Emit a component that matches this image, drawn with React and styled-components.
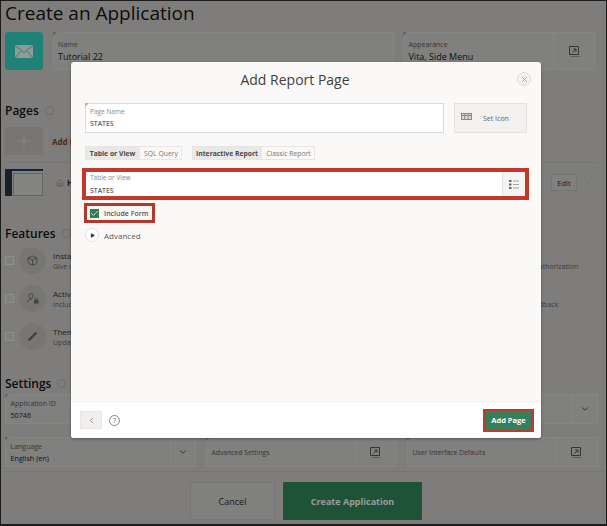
import React from 'react'
import styled, { createGlobalStyle } from 'styled-components'
import { ChevronDown, ChevronLeft, House, Plus, Star, X, Check, Play } from 'lucide-react'

const GlobalStyle = createGlobalStyle`
    html, body {
        margin: 0;
        padding: 0;
        overflow: hidden;
    }

    body {
        font-family: "Open Sans", "Liberation Sans", sans-serif;
        color: #222;
    }
`;

function MailIcon() {
    return (
        <svg width="18" height="13" viewBox="0 0 18 13">
            <rect width="18" height="13" fill="#f2fffb" />
            <path d="M0 0.5 L9 7.5 L18 0.5 M0 13 L6.5 5.5 M18 13 L11.5 5.5" fill="none" stroke="#5fd9cc" strokeWidth="1" />
        </svg>
    );
}

function OpenIcon() {
    return (
        <svg width="11" height="11" viewBox="0 0 11 11" fill="none" stroke="#5a5a5a" strokeWidth="1">
            <path d="M0.5 8.5 V0.5 H9.5 V8.5 H0.5" />
            <path d="M3.5 6.5 L7 3 M4.2 3 H7 V5.8" />
            <path d="M1.5 10.5 H10.5" stroke="#9a9a9a" />
        </svg>
    );
}

function TableIcon() {
    return (
        <svg width="11" height="7" viewBox="0 0 11 7" fill="none" stroke="#8a8886" strokeWidth="1">
            <rect x="0.5" y="0.5" width="10" height="6" fill="#dcdad8" />
            <path d="M3.8 0.5 V6.5 M7.2 0.5 V6.5 M0.5 2.5 H10.5" />
        </svg>
    );
}

function ListIcon() {
    return (
        <svg width="10" height="9" viewBox="0 0 10 9" fill="none" stroke="#a5a3a1" strokeWidth="1">
            <rect x="0" y="0" width="2.5" height="2" fill="#666" stroke="none" />
            <rect x="0" y="3.5" width="2.5" height="2" fill="#666" stroke="none" />
            <rect x="0" y="7" width="2.5" height="2" fill="#666" stroke="none" />
            <path d="M4 1 H10 M4 4.5 H10 M4 8 H10" />
        </svg>
    );
}

function InstallIcon() {
    return (
        <svg width="11" height="11" viewBox="0 0 11 11" fill="none" stroke="#6e6e6e" strokeWidth="0.9">
            <path d="M1 3 L5.5 1 L10 3 V6 C10 8.5 7.5 10 5.5 10 C3.5 10 1 8.5 1 6 Z" />
            <path d="M1 3 L5.5 5 L10 3 M5.5 5 V10" />
        </svg>
    );
}

function UserLockIcon() {
    return (
        <svg width="12" height="11" viewBox="0 0 12 11" fill="none" stroke="#6e6e6e" strokeWidth="0.9">
            <circle cx="4" cy="3" r="2.3" />
            <path d="M0.5 9.5 C0.5 7 2.5 6 5 6.3" />
            <rect x="7" y="7" width="4.5" height="3.5" fill="#6e6e6e" stroke="none" />
            <path d="M8 7 C8 4.8 10.5 4.8 10.5 7" />
        </svg>
    );
}

function BrushIcon() {
    return (
        <svg width="11" height="11" viewBox="0 0 11 11">
            <path d="M8.5 0.8 L10.2 2.5 L3.5 9.2 L0.8 10.2 L1.8 7.5 Z" fill="#6e6e6e" />
        </svg>
    );
}

export default function App() {
    return (
        <>
            <GlobalStyle />
            <Page>
                <Title>Create an Application</Title>

                <TopRow>
                    <AppTile><MailIcon /></AppTile>
                    <Field $height={38}>
                        <FieldBody>
                            <FieldLabel>Name</FieldLabel>
                            <FieldValue>Tutorial 22</FieldValue>
                        </FieldBody>
                    </Field>
                    <Field $height={38}>
                        <FieldBody>
                            <FieldLabel>Appearance</FieldLabel>
                            <FieldValue>Vita, Side Menu</FieldValue>
                        </FieldBody>
                        <FieldAddon $width={40}><OpenIcon /></FieldAddon>
                    </Field>
                </TopRow>

                <Heading $top={30}>Pages <HelpDot /></Heading>
                <AddRow>
                    <AddTile><Plus size={20} strokeWidth={0.8} color="#eeeeec" /></AddTile>
                    <AddLink>Add Page</AddLink>
                </AddRow>
                <HomeRow>
                    <Thumb><ThumbSide /><ThumbPane /></Thumb>
                    <House size={8} strokeWidth={1.2} color="#666" />
                    <HomeName>Home</HomeName>
                    <EditButton>Edit</EditButton>
                    <Star size={11} strokeWidth={1} color="#bbb" />
                </HomeRow>

                <Heading $top={27}>Features <HelpDot /></Heading>
                <FeatureGrid>
                    <Feature
                        icon={<InstallIcon />}
                        name="Install Progressive Web App"
                        note="Give users a native app experience"
                        asideName="Access Control"
                        aside="Enable role-based user authentication and user authorization"
                    />
                    <Feature
                        icon={<UserLockIcon />}
                        name="Activity Reporting"
                        note="Include usage reports and activity"
                        asideName="Feedback"
                        aside="Provide a way for end users of the app to give feedback"
                    />
                    <Feature
                        icon={<BrushIcon />}
                        name="Theme Style Selection"
                        note="Update the look of the application"
                    />
                </FeatureGrid>

                <Heading $top={23}>Settings <HelpDot /></Heading>
                <SettingsGrid>
                    <Field $height={30}>
                        <FieldBody>
                            <FieldLabel>Application ID</FieldLabel>
                            <FieldValue $small>50746</FieldValue>
                        </FieldBody>
                    </Field>
                    <Field $height={30} />
                    <Field $height={30}>
                        <FieldBody />
                        <FieldAddon $width={24}><ChevronDown size={10} color="#444" /></FieldAddon>
                    </Field>
                    <Field $height={30}>
                        <FieldBody>
                            <FieldLabel>Language</FieldLabel>
                            <FieldValue $small>English (en)</FieldValue>
                        </FieldBody>
                        <FieldAddon $width={24}><ChevronDown size={10} color="#444" /></FieldAddon>
                    </Field>
                    <Field $height={30}>
                        <FieldBody><FieldPlain>Advanced Settings</FieldPlain></FieldBody>
                        <FieldAddon $width={40}><OpenIcon /></FieldAddon>
                    </Field>
                    <Field $height={30}>
                        <FieldBody><FieldPlain>User Interface Defaults</FieldPlain></FieldBody>
                        <FieldAddon $width={40}><OpenIcon /></FieldAddon>
                    </Field>
                </SettingsGrid>

                <PageFooter>
                    <CancelButton>Cancel</CancelButton>
                    <CreateButton>Create Application</CreateButton>
                </PageFooter>

                <Scrim />

                <Dialog>
                    <DialogHead>
                        <DialogTitle>Add Report Page</DialogTitle>
                        <CloseButton><X size={9} strokeWidth={1.3} /></CloseButton>
                    </DialogHead>

                    <DialogBody>
                        <NameRow>
                            <DialogField $height={30}>
                                <DialogLabel>Page Name</DialogLabel>
                                <DialogValue>STATES</DialogValue>
                            </DialogField>
                            <SetIcon>
                                <TableIcon />
                                <span>Set Icon</span>
                            </SetIcon>
                        </NameRow>

                        <ToggleRow>
                            <ToggleGroup>
                                <Toggle $active $width={55}>Table or View</Toggle>
                                <Toggle $width={42}>SQL Query</Toggle>
                            </ToggleGroup>
                            <ToggleGroup>
                                <Toggle $active $width={70}>Interactive Report</Toggle>
                                <Toggle $width={53}>Classic Report</Toggle>
                            </ToggleGroup>
                        </ToggleRow>

                        <TableCallout>
                            <TableInput>
                                <DialogLabel>Table or View</DialogLabel>
                                <DialogValue $gap={3}>STATES</DialogValue>
                            </TableInput>
                            <ListButton><ListIcon /></ListButton>
                        </TableCallout>

                        <FormCallout>
                            <CheckBox><Check size={9} strokeWidth={2.2} color="#d9efe2" /></CheckBox>
                            <CheckLabel>Include Form</CheckLabel>
                        </FormCallout>

                        <AdvancedRow>
                            <AdvancedToggle><Play size={5} fill="#333" color="#333" /></AdvancedToggle>
                            <span>Advanced</span>
                        </AdvancedRow>
                    </DialogBody>

                    <DialogFooter>
                        <BackButton><ChevronLeft size={9} strokeWidth={1.5} color="#666" /></BackButton>
                        <HelpButton>?</HelpButton>
                        <AddPageCallout>
                            <AddPageButton>Add Page</AddPageButton>
                        </AddPageCallout>
                    </DialogFooter>
                </Dialog>
            </Page>
        </>
    );
}

function Feature({ icon, name, note, asideName, aside }) {
    return (
        <FeatureRow>
            <FeatureCheck />
            <FeatureIcon>{icon}</FeatureIcon>
            <FeatureText>
                <FeatureName>{name}</FeatureName>
                <FeatureNote>{note}</FeatureNote>
            </FeatureText>
            {aside && (
                <FeatureAside>
                    <FeatureName>{asideName}</FeatureName>
                    <FeatureNote>{aside}</FeatureNote>
                </FeatureAside>
            )}
        </FeatureRow>
    );
}

const Page = styled.div`
    position: relative;
    box-sizing: border-box;
    width: 607px;
    height: 526px;
    padding: 0 9px 0 4px;
    background: #d2d1cf;
    border: 1px solid #1c1c1c;
    border-bottom-width: 2px;
    overflow: hidden;
`;

const Title = styled.h1`
    margin: 0 0 5px;
    height: 26px;
    font-size: 19px;
    line-height: 25px;
    font-weight: 400;
    color: #141414;
    white-space: nowrap;
`;

const TopRow = styled.div`
    display: grid;
    grid-template-columns: 38px 341px 192px;
    column-gap: 9.5px;
`;

const AppTile = styled.div`
    height: 38px;
    display: flex;
    align-items: center;
    justify-content: center;
    background: #32d9ca;
    border-radius: 3px;
`;

const Field = styled.div`
    position: relative;
    box-sizing: border-box;
    display: flex;
    height: ${props => props.$height}px;
    background: #d6d5d3;
    border: 1px solid #dfdedc;

    &::before {
        content: '';
        position: absolute;
        top: -1px;
        left: -1px;
        border-top: 4px solid #aaa;
        border-right: 4px solid transparent;
    }
`;

const FieldBody = styled.div`
    flex: 1;
    min-width: 0;
    display: flex;
    flex-direction: column;
    justify-content: center;
    padding: 0 4.5px;
`;

const FieldLabel = styled.div`
    font-size: 7px;
    line-height: 11px;
    color: #5c5c5c;
`;

const FieldValue = styled.div`
    font-size: ${props => props.$small ? 7.2 : 9}px;
    line-height: ${props => props.$small ? 12 : 14}px;
    color: #222;
`;

const FieldPlain = styled.div`
    font-size: 6.8px;
    color: #5c5c5c;
`;

const FieldAddon = styled.div`
    width: ${props => props.$width}px;
    display: flex;
    align-items: center;
    justify-content: center;
    border-left: 1px solid #dfdedc;
`;

const Heading = styled.h2`
    display: flex;
    align-items: center;
    gap: 6px;
    margin: ${props => props.$top}px 0 0;
    height: 20px;
    font-size: 12px;
    font-weight: 600;
    color: #141414;
`;

const HelpDot = styled.span`
    box-sizing: border-box;
    width: 9px;
    height: 9px;
    border: 1px solid #b5b4b2;
    border-radius: 50%;
`;

const AddRow = styled.div`
    display: flex;
    align-items: center;
    gap: 9px;
    margin-top: 7px;
    padding-bottom: 7px;
    border-bottom: 1px solid #c4c3c1;
`;

const AddTile = styled.div`
    width: 38px;
    height: 28px;
    display: flex;
    align-items: center;
    justify-content: center;
    background: #c6c5c3;
`;

const AddLink = styled.span`
    font-size: 8px;
    font-weight: 700;
    color: #7a4a30;
`;

const HomeRow = styled.div`
    display: flex;
    align-items: center;
    gap: 3px;
    margin-top: 6px;
    height: 27px;
`;

const Thumb = styled.div`
    box-sizing: border-box;
    display: flex;
    width: 38px;
    height: 27px;
    margin-right: 10px;
    background: #dddcda;
    border-top: 2px solid #1d3a6a;
`;

const ThumbSide = styled.div`
    width: 7px;
    background: #2e3440;
`;

const ThumbPane = styled.div`
    flex: 1;
    margin: 2px 0 0 1px;
    border: 1px solid #a5a4a2;
`;

const HomeName = styled.span`
    flex: 1;
    font-size: 8px;
    font-weight: 700;
    color: #333;
`;

const EditButton = styled.span`
    width: 26px;
    height: 17px;
    margin-right: 6px;
    display: flex;
    align-items: center;
    justify-content: center;
    font-size: 7.5px;
    background: #d6d5d3;
    border: 1px solid #c4c3c1;
    box-sizing: border-box;
    color: #333;
`;

const FeatureGrid = styled.div`
    display: flex;
    flex-direction: column;
    gap: 11px;
    margin-top: 4px;
`;

const FeatureRow = styled.div`
    display: flex;
    align-items: center;
    height: 27px;
`;

const FeatureCheck = styled.span`
    box-sizing: border-box;
    width: 9px;
    height: 9px;
    margin-right: 5px;
    background: #d6d5d3;
    border: 1px solid #eeedeb;
`;

const FeatureIcon = styled.span`
    width: 27px;
    height: 27px;
    display: flex;
    align-items: center;
    justify-content: center;
    margin-right: 7px;
    background: #c6c5c3;
    border-radius: 50%;
`;

const FeatureText = styled.div`
    flex: 1;
    min-width: 0;
`;

const FeatureName = styled.div`
    font-size: 8px;
    line-height: 11px;
    color: #333;
`;

const FeatureNote = styled.div`
    font-size: 7px;
    line-height: 11px;
    color: #666;
    white-space: nowrap;
`;

const FeatureAside = styled.div`
    width: 219px;
    flex: none;
`;

const SettingsGrid = styled.div`
    display: grid;
    grid-template-columns: repeat(3, 190.5px);
    column-gap: 10.5px;
    row-gap: 13px;
    margin-top: 1px;
`;

const PageFooter = styled.div`
    display: flex;
    justify-content: center;
    gap: 8px;
    margin: 4px -9px 0 -4px;
    padding: 10px 0 0 5px;
    border-top: 1px solid #c8c7c5;
`;

const CancelButton = styled.button`
    width: 85px;
    height: 38px;
    padding: 0;
    font-family: inherit;
    font-size: 9px;
    color: #333;
    background: #d6d5d3;
    border: 1px solid #c6c5c3;
`;

const CreateButton = styled.button`
    width: 139px;
    height: 38px;
    padding: 0;
    font-family: inherit;
    font-size: 9px;
    font-weight: 700;
    color: #ffffff;
    background: #348a5e;
    border: 0;
    border-radius: 1px;
`;

const Scrim = styled.div`
    position: absolute;
    inset: 0;
    background: rgba(0, 0, 0, 0.4);
`;

const Dialog = styled.div`
    position: absolute;
    left: 70px;
    top: 61px;
    width: 470px;
    height: 376px;
    display: flex;
    flex-direction: column;
    background: #fbf9f8;
    border-radius: 3px;
    box-shadow: 0 1px 3px rgba(0, 0, 0, 0.35);
    overflow: hidden;
`;

const DialogHead = styled.div`
    position: relative;
    box-sizing: border-box;
    height: 41px;
    padding: 0 22px 7px 0;
    display: flex;
    align-items: center;
    justify-content: center;
`;

const DialogTitle = styled.h3`
    margin: 0;
    font-size: 14px;
    font-weight: 500;
    color: #403e3c;
`;

const CloseButton = styled.span`
    position: absolute;
    right: 10px;
    top: 10px;
    box-sizing: border-box;
    width: 14px;
    height: 14px;
    display: flex;
    align-items: center;
    justify-content: center;
    color: #666;
    background: #f6f4f2;
    border: 1px solid #dddbd9;
    border-radius: 50%;
`;

const DialogBody = styled.div`
    flex: 1;
    display: flex;
    flex-direction: column;
    padding: 0 14px 0 11px;
`;

const NameRow = styled.div`
    display: flex;
    gap: 10px;
    margin-left: 3px;
`;

const DialogField = styled.div`
    position: relative;
    flex: 1;
    box-sizing: border-box;
    height: ${props => props.$height}px;
    padding: 3px 4px;
    background: #ffffff;
    border: 1px solid #dedcda;

    &::before {
        content: '';
        position: absolute;
        top: -1px;
        left: -1px;
        border-top: 4px solid #b5b3b1;
        border-right: 4px solid transparent;
    }
`;

const DialogLabel = styled.div`
    font-size: 6.5px;
    line-height: 10px;
    color: #8a8886;
`;

const DialogValue = styled.div`
    margin-top: ${props => props.$gap || 2}px;
    font-size: 7px;
    line-height: 10px;
    color: #2a2a2a;
`;

const SetIcon = styled.div`
    box-sizing: border-box;
    width: 73px;
    height: 30px;
    display: flex;
    align-items: center;
    gap: 11px;
    padding-left: 6px;
    font-size: 7px;
    color: #666;
    background: #f3f1ef;
    border: 1px solid #e5e3e1;

    svg {
        margin-top: -3px;
    }
`;

const ToggleRow = styled.div`
    display: flex;
    gap: 10px;
    margin: 13px 0 0 3px;
`;

const ToggleGroup = styled.div`
    display: flex;
    height: 14px;
    outline: 1px solid #e8e6e4;
    outline-offset: -1px;
`;

const Toggle = styled.span`
    width: ${props => props.$width}px;
    display: flex;
    align-items: center;
    justify-content: center;
    font-size: 6.8px;
    font-weight: ${props => props.$active ? 700 : 400};
    color: ${props => props.$active ? '#4a4846' : '#787674'};
    background: ${props => props.$active ? '#eae8e6' : '#fbf9f8'};
`;

const TableCallout = styled.div`
    box-sizing: border-box;
    display: flex;
    width: 447px;
    height: 32px;
    margin-top: 8px;
    background: #ffffff;
    border: 4px solid #c0392b;
`;

const TableInput = styled.div`
    flex: 1;
    padding: 1px 4px;
`;

const ListButton = styled.div`
    width: 22px;
    display: flex;
    align-items: center;
    justify-content: center;
    background: #f6f4f2;
    border-left: 1px solid #e5e3e1;
`;

const FormCallout = styled.div`
    box-sizing: border-box;
    display: flex;
    align-items: center;
    gap: 5px;
    width: 71px;
    height: 20px;
    margin: 3px 0 0 2px;
    padding-left: 3px;
    border: 3px solid #b8352a;
`;

const CheckBox = styled.span`
    width: 9px;
    height: 9px;
    display: flex;
    align-items: center;
    justify-content: center;
    background: #2f7d57;
`;

const CheckLabel = styled.span`
    font-size: 7px;
    font-weight: 600;
    color: #555351;
    white-space: nowrap;
`;

const AdvancedRow = styled.div`
    display: flex;
    align-items: center;
    gap: 5px;
    margin: 5px 0 0 3px;
    font-size: 8px;
    color: #5a5856;
`;

const AdvancedToggle = styled.span`
    box-sizing: border-box;
    width: 14px;
    height: 14px;
    display: flex;
    align-items: center;
    justify-content: center;
    background: #ffffff;
    border: 1px solid #e5e3e1;
    border-radius: 50%;
`;

const DialogFooter = styled.div`
    box-sizing: border-box;
    height: 37px;
    display: flex;
    align-items: center;
    padding: 0 7px 0 9px;
    background: #ffffff;
    border-top: 1px solid #f3f1ef;
`;

const BackButton = styled.span`
    width: 22px;
    height: 18px;
    display: flex;
    align-items: center;
    justify-content: center;
    background: #f1efed;
    border: 1px solid #e9e7e5;
    box-sizing: border-box;
`;

const HelpButton = styled.span`
    box-sizing: border-box;
    width: 11px;
    height: 11px;
    margin-left: 7px;
    display: flex;
    align-items: center;
    justify-content: center;
    font-size: 7px;
    color: #666;
    border: 1px solid #8a8886;
    border-radius: 50%;
`;

const AddPageCallout = styled.div`
    box-sizing: border-box;
    margin-left: auto;
    width: 51px;
    height: 23px;
    padding: 2px 3px;
    background: #c0392b;
`;

const AddPageButton = styled.div`
    height: 100%;
    display: flex;
    align-items: center;
    justify-content: center;
    font-size: 7.5px;
    font-weight: 700;
    color: #ffffff;
    background: #347f5c;
`;
